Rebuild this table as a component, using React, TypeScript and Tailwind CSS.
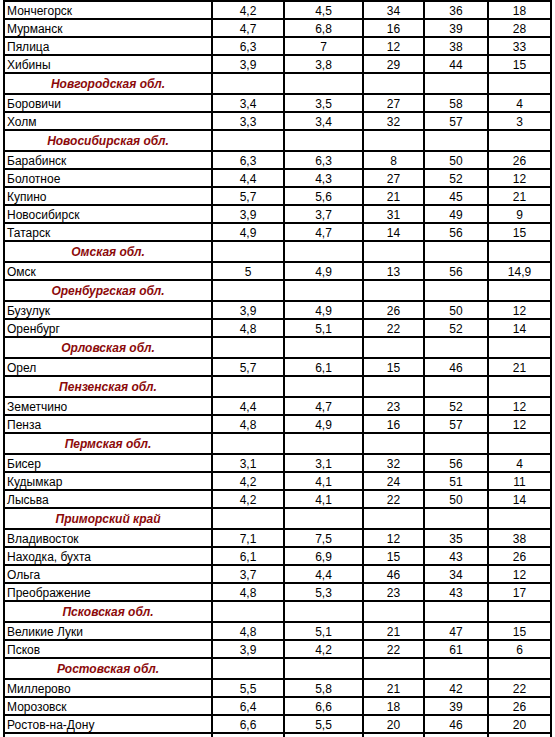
import React from 'react';

type Row = { region: string } | { name: string; v: string[] };

const rows: Row[] = [
  { name: 'Мончегорск', v: ['4,2', '4,5', '34', '36', '18'] },
  { name: 'Мурманск', v: ['4,7', '6,8', '16', '39', '28'] },
  { name: 'Пялица', v: ['6,3', '7', '12', '38', '33'] },
  { name: 'Хибины', v: ['3,9', '3,8', '29', '44', '15'] },
  { region: 'Новгородская обл.' },
  { name: 'Боровичи', v: ['3,4', '3,5', '27', '58', '4'] },
  { name: 'Холм', v: ['3,3', '3,4', '32', '57', '3'] },
  { region: 'Новосибирская обл.' },
  { name: 'Барабинск', v: ['6,3', '6,3', '8', '50', '26'] },
  { name: 'Болотное', v: ['4,4', '4,3', '27', '52', '12'] },
  { name: 'Купино', v: ['5,7', '5,6', '21', '45', '21'] },
  { name: 'Новосибирск', v: ['3,9', '3,7', '31', '49', '9'] },
  { name: 'Татарск', v: ['4,9', '4,7', '14', '56', '15'] },
  { region: 'Омская обл.' },
  { name: 'Омск', v: ['5', '4,9', '13', '56', '14,9'] },
  { region: 'Оренбургская обл.' },
  { name: 'Бузулук', v: ['3,9', '4,9', '26', '50', '12'] },
  { name: 'Оренбург', v: ['4,8', '5,1', '22', '52', '14'] },
  { region: 'Орловская обл.' },
  { name: 'Орел', v: ['5,7', '6,1', '15', '46', '21'] },
  { region: 'Пензенская обл.' },
  { name: 'Земетчино', v: ['4,4', '4,7', '23', '52', '12'] },
  { name: 'Пенза', v: ['4,8', '4,9', '16', '57', '12'] },
  { region: 'Пермская обл.' },
  { name: 'Бисер', v: ['3,1', '3,1', '32', '56', '4'] },
  { name: 'Кудымкар', v: ['4,2', '4,1', '24', '51', '11'] },
  { name: 'Лысьва', v: ['4,2', '4,1', '22', '50', '14'] },
  { region: 'Приморский край' },
  { name: 'Владивосток', v: ['7,1', '7,5', '12', '35', '38'] },
  { name: 'Находка, бухта', v: ['6,1', '6,9', '15', '43', '26'] },
  { name: 'Ольга', v: ['3,7', '4,4', '46', '34', '12'] },
  { name: 'Преображение', v: ['4,8', '5,3', '23', '43', '17'] },
  { region: 'Псковская обл.' },
  { name: 'Великие Луки', v: ['4,8', '5,1', '21', '47', '15'] },
  { name: 'Псков', v: ['3,9', '4,2', '22', '61', '6'] },
  { region: 'Ростовская обл.' },
  { name: 'Миллерово', v: ['5,5', '5,8', '21', '42', '22'] },
  { name: 'Морозовск', v: ['6,4', '6,6', '18', '39', '26'] },
  { name: 'Ростов-на-Дону', v: ['6,6', '5,5', '20', '46', '20'] },
  { name: '', v: ['', '', '', '', ''] },
];

const App = () => {
  return (
    <div className="w-[555px] h-[737px] overflow-hidden bg-white">
      <div
        className="ml-[3px] w-[549px] grid grid-cols-[206px_70px_77px_59px_62px_61px] gap-[2px] p-[2px] bg-black text-[12px] leading-[16px] text-black"
        style={{ fontFamily: '"Liberation Sans", Arial, sans-serif' }}
      >
        {rows.map((row, i) => {
          if ('region' in row) {
            return (
              <React.Fragment key={`r${i}`}>
                <div className="h-[19px] pt-[2px] bg-white text-center font-bold italic text-[#8c0a0a]">
                  {row.region}
                </div>
                {[0, 1, 2, 3, 4].map(k => (
                  <div key={k} className="h-[19px] bg-white" />
                ))}
              </React.Fragment>
            );
          }
          return (
            <React.Fragment key={`d${i}`}>
              <div className="h-[16px] pt-[1px] bg-white pl-[2px] whitespace-nowrap">
                {row.name}
              </div>
              {row.v.map((val, k) => (
                <div key={k} className="h-[16px] pt-[1px] bg-white text-center">
                  {val}
                </div>
              ))}
            </React.Fragment>
          );
        })}
      </div>
    </div>
  );
};

export default App;
